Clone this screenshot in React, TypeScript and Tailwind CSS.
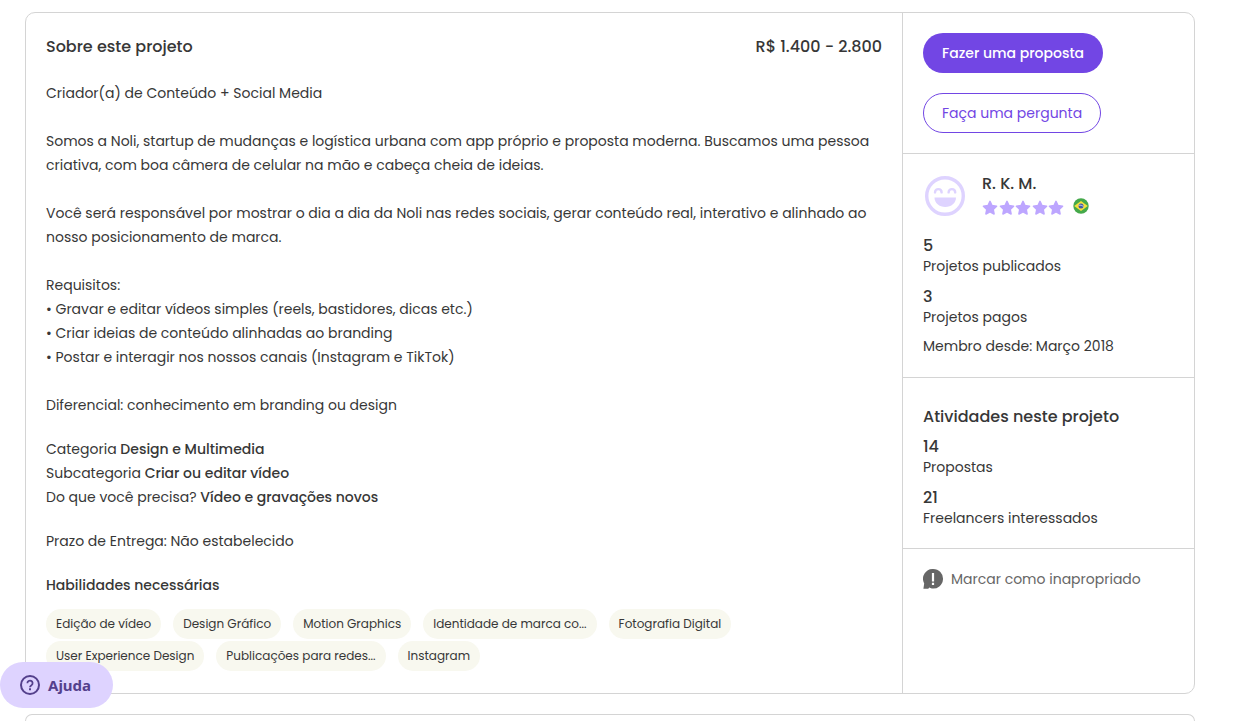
import React from "react";

const skills = [
  "Edição de vídeo",
  "Design Gráfico",
  "Motion Graphics",
  "Identidade de marca co...",
  "Fotografia Digital",
  "User Experience Design",
  "Publicações para redes...",
  "Instagram",
];

const paragraphs = [
  "Criador(a) de Conteúdo + Social Media",
  "Somos a Noli, startup de mudanças e logística urbana com app próprio e proposta moderna. Buscamos uma pessoa criativa, com boa câmera de celular na mão e cabeça cheia de ideias.",
  "Você será responsável por mostrar o dia a dia da Noli nas redes sociais, gerar conteúdo real, interativo e alinhado ao nosso posicionamento de marca.",
  "Requisitos:\n• Gravar e editar vídeos simples (reels, bastidores, dicas etc.)\n• Criar ideias de conteúdo alinhadas ao branding\n• Postar e interagir nos nossos canais (Instagram e TikTok)",
  "Diferencial: conhecimento em branding ou design",
];

const details = [
  ["Categoria", "Design e Multimedia"],
  ["Subcategoria", "Criar ou editar vídeo"],
  ["Do que você precisa?", "Vídeo e gravações novos"],
];

function Star() {
  return (
    <svg viewBox="0 0 16 16" className="size-4" aria-hidden="true">
      <path
        d="M8 1.4 10 5.6l4.6.6-3.4 3.2.9 4.6L8 11.8 3.9 14l.9-4.6L1.4 6.2 6 5.6Z"
        fill="#bda6ff"
        stroke="#bda6ff"
        strokeWidth="1.5"
        strokeLinejoin="round"
      />
    </svg>
  );
}

function Smiley() {
  return (
    <svg viewBox="0 0 40 40" className="size-10" aria-hidden="true">
      <circle cx="20" cy="20" r="18.3" fill="none" stroke="#ded3ff" strokeWidth="3.4" />
      <path
        d="M10 16.400c0-4.400 6.600-4.400 6.600 0M23.600 16.400c0-4.400 6.600-4.400 6.600 0"
        fill="none"
        stroke="#ded3ff"
        strokeWidth="2.4"
        strokeLinecap="round"
      />
      <path d="M9.500 21.500h21.500c0 5.500-4.700 9.500-10.750 9.500S9.500 27 9.500 21.500Z" fill="#ded3ff" />
    </svg>
  );
}

function Flag() {
  return (
    <svg viewBox="0 0 16 16" className="size-4" role="img" aria-label="Brasil">
      <circle cx="8" cy="8" r="7.7" fill="#45a94a" />
      <path d="M8 3 14.800 8 8 13 1.200 8Z" fill="#f5e13c" />
      <circle cx="8" cy="8" r="2.500" fill="#3f5aa5" />
      <path d="M5.700 7.300c2-.4 3.600.1 4.700 1.400" stroke="#fff" strokeWidth=".7" fill="none" />
    </svg>
  );
}

function ReportIcon() {
  return (
    <svg viewBox="0 0 20 20" className="size-5 shrink-0" aria-hidden="true">
      <path
        d="M10.200 0a9.800 9.800 0 1 1-1.400 19.500c-1-.2-1.800-.5-2.600-.9-.3.900-.8 1.200-1.800 1.200H.4l.8-5.400A9.800 9.800 0 0 1 10.200 0Z"
        fill="#666"
      />
      <path d="M8.900 4h2.200v8.400H8.900ZM8.900 13.800h2.200V16H8.900Z" fill="#fff" />
    </svg>
  );
}

function HelpIcon() {
  return (
    <svg viewBox="0 0 20 20" className="size-5" fill="none" stroke="currentColor" strokeWidth="2" aria-hidden="true">
      <circle cx="10" cy="10" r="9" />
      <path d="M7.400 8.200a2.600 2.500 0 1 1 4.200 1.900c-.9.700-1.600 1-1.600 2.100" strokeWidth="1.800" />
      <path d="M10 13.300v2" />
    </svg>
  );
}

function Stat({ value, label }: { value: string; label: string }) {
  return (
    <div>
      <p className="text-base leading-5 font-medium">{value}</p>
      <p className="leading-5">{label}</p>
    </div>
  );
}

export default function App() {
  return (
    <div className="flex min-h-screen flex-col gap-5 bg-white pt-3 pr-12 pl-[25px] font-[Poppins,Inter,'Noto_Sans',sans-serif] text-[14px] text-[#373737]">
      <main className="flex rounded-[10px] border border-[#d4d4d4]">
        <section className="min-w-0 flex-1 p-5 pb-[22px]">
          <header className="flex justify-between text-base leading-7 font-medium">
            <h1>Sobre este projeto</h1>
            <p>R$ 1.400 - 2.800</p>
          </header>
          <div className="mt-5 flex flex-col gap-6 leading-6">
            {paragraphs.map((text) => (
              <p key={text} className="whitespace-pre-line">{text}</p>
            ))}
          </div>
          <div className="mt-5 leading-6">
            {details.map(([label, value]) => (
              <p key={label}>
                {label} <strong className="font-medium">{value}</strong>
              </p>
            ))}
          </div>
          <p className="mt-5 leading-6">Prazo de Entrega: Não estabelecido</p>
          <h2 className="mt-5 leading-6 font-medium">Habilidades necessárias</h2>
          <ul className="mt-3 flex flex-wrap gap-x-3 gap-y-0.5 text-[12px] leading-[30px]">
            {skills.map((skill) => (
              <li key={skill}>
                <a href="#" className="block rounded-full bg-[#f8f8ef] px-2.5">{skill}</a>
              </li>
            ))}
          </ul>
        </section>

        <aside className="w-[292px] shrink-0 divide-y divide-[#d4d4d4] border-l border-[#d4d4d4]">
          <div className="flex flex-col items-start gap-5 p-5">
            <button type="button" className="h-10 rounded-full bg-[#7246e4] px-[19px] font-medium text-white">
              Fazer uma proposta
            </button>
            <button type="button" className="h-10 rounded-full border border-[#7246e4] px-[18px] text-[#7246e4]">
              Faça uma pergunta
            </button>
          </div>
          <div className="p-5 pb-[21px]">
            <div className="flex items-center gap-[17px] pl-0.5">
              <Smiley />
              <div>
                <p className="text-base leading-5 font-medium">R. K. M.</p>
                <div className="mt-1 flex items-start gap-[9px] pb-0.5">
                  <div className="flex w-[82px] justify-between pt-0.5" role="img" aria-label="5 estrelas">
                    {[1, 2, 3, 4, 5].map((n) => (
                      <Star key={n} />
                    ))}
                  </div>
                  <Flag />
                </div>
              </div>
            </div>
            <div className="mt-[18px] flex flex-col gap-[11px]">
              <Stat value="5" label="Projetos publicados" />
              <Stat value="3" label="Projetos pagos" />
            </div>
            <p className="mt-[9px] leading-5">Membro desde: Março 2018</p>
          </div>
          <div className="px-5 pt-[25px] pb-5">
            <h2 className="text-base leading-7 font-medium">Atividades neste projeto</h2>
            <div className="mt-1.5 flex flex-col gap-[11px]">
              <Stat value="14" label="Propostas" />
              <Stat value="21" label="Freelancers interessados" />
            </div>
          </div>
          <div className="p-5">
            <a href="#" className="flex items-center gap-2 leading-5 text-[#666]">
              <ReportIcon />
              Marcar como inapropriado
            </a>
          </div>
        </aside>
      </main>

      <section className="flex-1 rounded-t-[10px] border border-b-0 border-[#d4d4d4]" />

      <button
        type="button"
        className="fixed bottom-[13px] left-0 flex h-[46px] items-center gap-2 rounded-full bg-[#ded3ff] pr-[22px] pl-5 font-['Noto_Sans',sans-serif] text-[15px] font-bold text-[#54408c]"
      >
        <HelpIcon />
        Ajuda
      </button>
    </div>
  );
}
